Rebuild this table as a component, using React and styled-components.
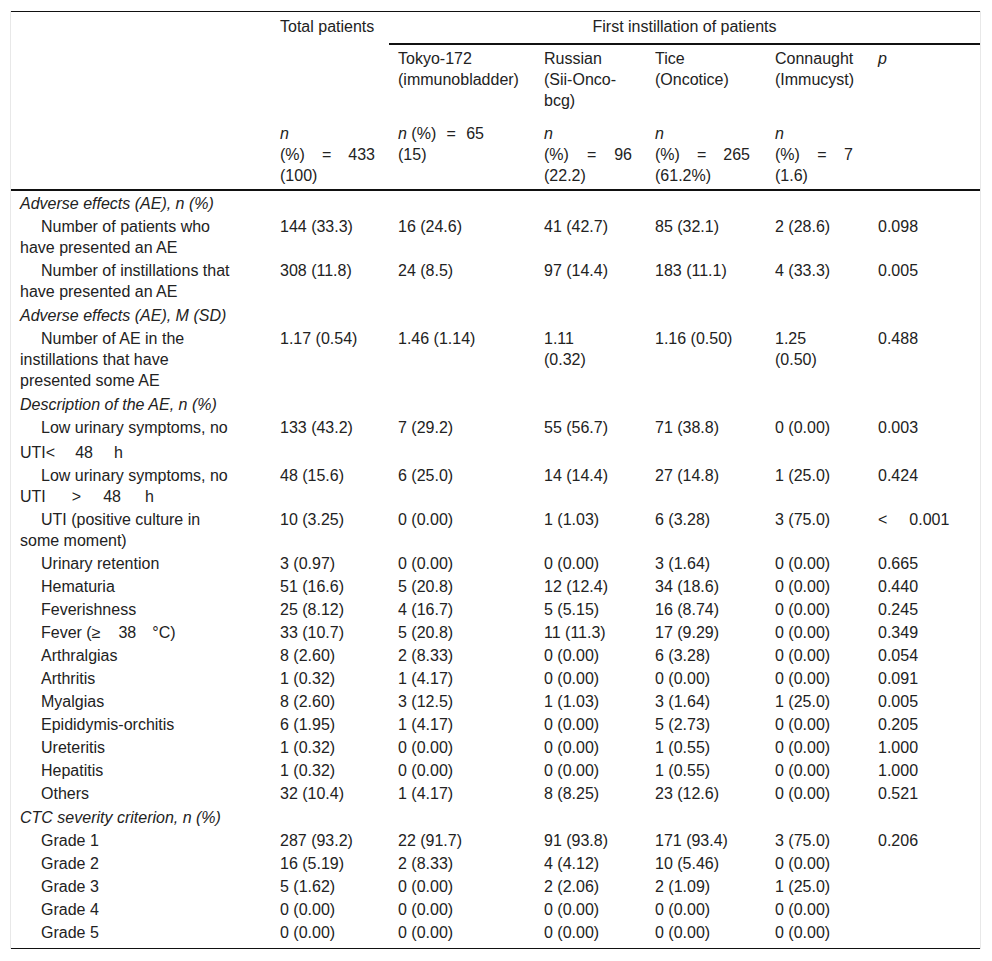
import React from "react";
import styled, { createGlobalStyle } from "styled-components";

const GlobalStyle = createGlobalStyle`
  body {
    margin: 0;
    background: #fff;
    font-family: "Liberation Sans", Arial, sans-serif;
    color: #222;
  }
`;

const cols = [260, 118, 146, 111, 120, 103, 111];

const rows = [
  { section: "Adverse effects (AE), n (%)" },
  { label: ["Number of patients who", "have presented an AE"], v: ["144 (33.3)", "16 (24.6)", "41 (42.7)", "85 (32.1)", "2 (28.6)", "0.098"] },
  { label: ["Number of instillations that", "have presented an AE"], v: ["308 (11.8)", "24 (8.5)", "97 (14.4)", "183 (11.1)", "4 (33.3)", "0.005"] },
  { section: "Adverse effects (AE), M (SD)" },
  { label: ["Number of AE in the", "instillations that have", "presented some AE"], v: ["1.17 (0.54)", "1.46 (1.14)", ["1.11", "(0.32)"], "1.16 (0.50)", ["1.25", "(0.50)"], "0.488"] },
  { section: "Description of the AE, n (%)" },
  { label: "lt48", v: ["133 (43.2)", "7 (29.2)", "55 (56.7)", "71 (38.8)", "0 (0.00)", "0.003"] },
  { label: "gt48", v: ["48 (15.6)", "6 (25.0)", "14 (14.4)", "27 (14.8)", "1 (25.0)", "0.424"] },
  { label: ["UTI (positive culture in", "some moment)"], v: ["10 (3.25)", "0 (0.00)", "1 (1.03)", "6 (3.28)", "3 (75.0)", "lt001"] },
  { label: "Urinary retention", v: ["3 (0.97)", "0 (0.00)", "0 (0.00)", "3 (1.64)", "0 (0.00)", "0.665"] },
  { label: "Hematuria", v: ["51 (16.6)", "5 (20.8)", "12 (12.4)", "34 (18.6)", "0 (0.00)", "0.440"] },
  { label: "Feverishness", v: ["25 (8.12)", "4 (16.7)", "5 (5.15)", "16 (8.74)", "0 (0.00)", "0.245"] },
  { label: "fever", v: ["33 (10.7)", "5 (20.8)", "11 (11.3)", "17 (9.29)", "0 (0.00)", "0.349"] },
  { label: "Arthralgias", v: ["8 (2.60)", "2 (8.33)", "0 (0.00)", "6 (3.28)", "0 (0.00)", "0.054"] },
  { label: "Arthritis", v: ["1 (0.32)", "1 (4.17)", "0 (0.00)", "0 (0.00)", "0 (0.00)", "0.091"] },
  { label: "Myalgias", v: ["8 (2.60)", "3 (12.5)", "1 (1.03)", "3 (1.64)", "1 (25.0)", "0.005"] },
  { label: "Epididymis-orchitis", v: ["6 (1.95)", "1 (4.17)", "0 (0.00)", "5 (2.73)", "0 (0.00)", "0.205"] },
  { label: "Ureteritis", v: ["1 (0.32)", "0 (0.00)", "0 (0.00)", "1 (0.55)", "0 (0.00)", "1.000"] },
  { label: "Hepatitis", v: ["1 (0.32)", "0 (0.00)", "0 (0.00)", "1 (0.55)", "0 (0.00)", "1.000"] },
  { label: "Others", v: ["32 (10.4)", "1 (4.17)", "8 (8.25)", "23 (12.6)", "0 (0.00)", "0.521"] },
  { section: "CTC severity criterion, n (%)" },
  { label: "Grade 1", v: ["287 (93.2)", "22 (91.7)", "91 (93.8)", "171 (93.4)", "3 (75.0)", "0.206"] },
  { label: "Grade 2", v: ["16 (5.19)", "2 (8.33)", "4 (4.12)", "10 (5.46)", "0 (0.00)", ""] },
  { label: "Grade 3", v: ["5 (1.62)", "0 (0.00)", "2 (2.06)", "2 (1.09)", "1 (25.0)", ""] },
  { label: "Grade 4", v: ["0 (0.00)", "0 (0.00)", "0 (0.00)", "0 (0.00)", "0 (0.00)", ""] },
  { label: "Grade 5", v: ["0 (0.00)", "0 (0.00)", "0 (0.00)", "0 (0.00)", "0 (0.00)", ""] },
];

function Lines({ items }) {
  return items.map((t, i) => (
    <React.Fragment key={i}>
      {i > 0 && <br />}
      {t}
    </React.Fragment>
  ));
}

function Label({ label }) {
  if (label === "lt48")
    return (
      <>
        Low urinary symptoms, no
        <br />
        <Lower>
          UTI&lt;<Gap w={20} />48<Gap w={21} />h
        </Lower>
      </>
    );
  if (label === "gt48")
    return (
      <>
        Low urinary symptoms, no
        <br />
        UTI<Gap w={26} />&gt;<Gap w={22} />48<Gap w={24} />h
      </>
    );
  if (label === "fever")
    return (
      <>
        Fever (≥<Gap w={18} />38<Gap w={16} />°C)
      </>
    );
  if (Array.isArray(label)) return <Lines items={label} />;
  return label;
}

function Value({ v }) {
  if (v === "lt001")
    return (
      <>
        &lt;<Gap w={22} />0.001
      </>
    );
  if (Array.isArray(v)) return <Lines items={v} />;
  return v;
}

export default function App() {
  return (
    <>
      <GlobalStyle />
      <Wrapper>
        <Table>
          <colgroup>
            {cols.map((w, i) => (
              <col key={i} style={{ width: w }} />
            ))}
          </colgroup>
          <thead>
            <tr>
              <TopCell />
              <TopCell>Total patients</TopCell>
              <TopCell colSpan={5} $group>
                First instillation of patients
              </TopCell>
            </tr>
            <tr>
              <MidCell />
              <MidCell />
              <MidCell>
                Tokyo-172
                <br />
                (immunobladder)
              </MidCell>
              <MidCell>
                Russian
                <br />
                (Sii-Onco-
                <br />
                bcg)
              </MidCell>
              <MidCell>
                Tice
                <br />
                (Oncotice)
              </MidCell>
              <MidCell>
                Connaught
                <br />
                (Immucyst)
              </MidCell>
              <MidCell>
                <i>p</i>
              </MidCell>
            </tr>
            <tr>
              <CountCell />
              <CountCell>
                <i>n</i>
                <Spread w={95}>
                  <span>(%)</span>
                  <span>=</span>
                  <span>433</span>
                </Spread>
                (100)
              </CountCell>
              <CountCell>
                <Spread w={86}>
                  <span>
                    <i>n</i> (%)
                  </span>
                  <span>=</span>
                  <span>65</span>
                </Spread>
                (15)
              </CountCell>
              <CountCell>
                <i>n</i>
                <Spread w={88}>
                  <span>(%)</span>
                  <span>=</span>
                  <span>96</span>
                </Spread>
                (22.2)
              </CountCell>
              <CountCell>
                <i>n</i>
                <Spread w={95}>
                  <span>(%)</span>
                  <span>=</span>
                  <span>265</span>
                </Spread>
                (61.2%)
              </CountCell>
              <CountCell>
                <i>n</i>
                <Spread w={78}>
                  <span>(%)</span>
                  <span>=</span>
                  <span>7</span>
                </Spread>
                (1.6)
              </CountCell>
              <CountCell />
            </tr>
          </thead>
          <tbody>
            {rows.map((r, i) => {
              const last = i === rows.length - 1;
              if (r.section)
                return (
                  <tr key={i}>
                    <SectionCell colSpan={7}>{r.section}</SectionCell>
                  </tr>
                );
              return (
                <tr key={i}>
                  <LabelCell $last={last}>
                    <Label label={r.label} />
                  </LabelCell>
                  {r.v.map((v, j) => (
                    <Cell key={j} $last={last}>
                      <Value v={v} />
                    </Cell>
                  ))}
                </tr>
              );
            })}
          </tbody>
        </Table>
      </Wrapper>
    </>
  );
}

const Wrapper = styled.div`
  margin: 11px 10px 0 10px;
  width: 969px;
  border-left: 1px solid #e8e8e8;
  border-right: 1px solid #e8e8e8;
`;

const Table = styled.table`
  width: 969px;
  table-layout: fixed;
  border-collapse: separate;
  border-spacing: 0;
  border-top: 1px solid #111;
  border-bottom: 1px solid #111;
  font-size: 16px;
  line-height: 21px;
  color: #222;
`;

const HeadCell = styled.th`
  font-weight: normal;
  text-align: left;
  vertical-align: top;
  white-space: nowrap;
`;

const TopCell = styled(HeadCell)`
  padding: 4px 9px 6px;
  text-align: ${(p) => (p.$group ? "center" : "left")};
  border-bottom: 2px solid ${(p) => (p.$group ? "#111" : "transparent")};
`;

const MidCell = styled(HeadCell)`
  padding: 3px 9px 9px;
`;

const CountCell = styled(HeadCell)`
  padding: 3px 9px 3px;
  border-bottom: 2px solid #111;
`;

const Spread = styled.div`
  display: flex;
  justify-content: space-between;
  width: ${(p) => p.w}px;
`;

const Cell = styled.td`
  padding: 1px 9px ${(p) => (p.$last ? 5 : 1)}px;
  vertical-align: top;
  white-space: nowrap;
`;

const LabelCell = styled(Cell)`
  text-indent: 21px;
`;

const SectionCell = styled.td`
  padding: 1.5px 9px;
  font-style: italic;
  vertical-align: top;
`;

const Lower = styled.span`
  display: inline-block;
  padding-top: 4px;
  text-indent: 0;
`;

const Gap = styled.span`
  display: inline-block;
  width: ${(p) => p.w}px;
`;
